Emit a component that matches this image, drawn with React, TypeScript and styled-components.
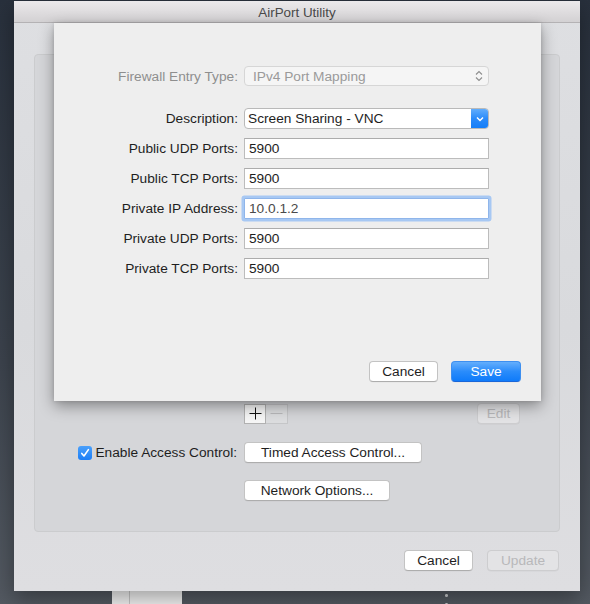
import React from 'react'
import styled, { createGlobalStyle, css } from 'styled-components'

const GlobalStyle = createGlobalStyle`
  html, body {
    margin: 0;
    padding: 0;
  }
  body {
    width: 590px;
    height: 604px;
    overflow: hidden;
    background: linear-gradient(180deg, #28303c 0%, #3c434d 60%, #535961 100%);
    font-family: "Liberation Sans", Arial, sans-serif;
    font-size: 13.7px;
    color: #1e1e1e;
  }
  * { box-sizing: border-box; }
`

const Desktop = styled.div`
  display: flex;
  flex-direction: column;
  height: 604px;
  padding-top: 1px;
`

const Window = styled.div`
  position: relative;
  flex: none;
  margin-left: 14px;
  width: 566px;
  height: 590px;
  display: flex;
  flex-direction: column;
  background: linear-gradient(180deg, #dedfe2 0%, #d9dadd 55%, #dedee1 100%);
  box-shadow: 0 8px 20px rgba(0, 0, 0, 0.35);
`

const TitleBar = styled.div`
  flex: none;
  height: 22px;
  padding-top: 2px;
  border-bottom: 1px solid #b4b2b4;
  background: linear-gradient(180deg, #ebe9eb, #d3d1d3);
  display: flex;
  align-items: center;
  justify-content: center;
  font-size: 13.4px;
  color: #4a4a4a;
`

const Body = styled.div`
  flex: 1;
  display: flex;
  flex-direction: column;
  padding: 31px 20px 20px 20px;
`

const Panel = styled.div`
  flex: 1;
  display: flex;
  flex-direction: column;
  border: 1px solid #cbccce;
  border-radius: 4px;
  background: #d5d6d9;
  padding-bottom: 31px;
`

const ListArea = styled.div`
  flex: 1;
`

const FormRow = styled.div<{ $gap?: number }>`
  display: grid;
  grid-template-columns: 202px 1fr;
  column-gap: 7px;
  align-items: center;
  height: 20px;
  margin-top: ${p => p.$gap ?? 0}px;
  padding-right: 39px;
`

const RowLabel = styled.label`
  display: flex;
  align-items: center;
  justify-content: flex-end;
  gap: 4px;
  white-space: nowrap;
`

const Cell = styled.div`
  display: flex;
  align-items: center;
  height: 100%;
`

const Button = styled.button<{ $w: number; $primary?: boolean }>`
  width: ${p => p.$w}px;
  height: 21px;
  padding: 0;
  border-radius: 4px;
  font-family: inherit;
  font-size: 13.7px;
  line-height: 19px;
  color: #1e1e1e;
  background: #ffffff;
  border: 1px solid #c3c3c3;
  border-bottom-color: #adadad;
  box-shadow: 0 0.5px 0 rgba(0, 0, 0, 0.05);
  ${p => p.$primary && css`
    color: #ffffff;
    background: linear-gradient(180deg, #64aefc 0%, #2a8cfb 50%, #0f7bfa 100%);
    border-color: #3d8ff0;
    border-bottom-color: #1a66d8;
  `}
  &:disabled {
    color: #b8b8ba;
    background: #e3e3e5;
    border-color: #cdcdcf;
  }
`

const Segmented = styled.div`
  display: flex;
  height: 20px;
`

const Segment = styled.div<{ $off?: boolean }>`
  width: 22px;
  height: 20px;
  display: flex;
  align-items: center;
  justify-content: center;
  border: 1px solid ${p => (p.$off ? '#c5c6c8' : '#b1b1b1')};
  background: ${p => (p.$off ? '#dcdddf' : '#f6f6f6')};
  & + & { border-left: none; }
`

const Check = styled.span`
  width: 14px;
  height: 14px;
  margin-right: -1px;
  border-radius: 3px;
  background: linear-gradient(180deg, #4aa0fb, #1b7ef6);
  display: flex;
  align-items: center;
  justify-content: center;
`

const Footer = styled.div`
  display: flex;
  justify-content: flex-end;
  gap: 14px;
  margin-top: 18px;
  padding-right: 1px;
`

const Sheet = styled.div`
  position: absolute;
  top: 22px;
  left: 40px;
  width: 487px;
  height: 378px;
  background: #eeeeee;
  box-shadow: 0 5px 14px rgba(0, 0, 0, 0.38), 0 0 4px rgba(0, 0, 0, 0.12);
  display: flex;
  flex-direction: column;
  padding: 43px 20px 19px 0;
`

const Form = styled.div`
  display: flex;
  flex-direction: column;
  gap: 9px;
`

const SheetRow = styled.div<{ $lead?: boolean }>`
  display: grid;
  grid-template-columns: 184px 245px;
  column-gap: 6px;
  align-items: center;
  height: ${p => (p.$lead ? 20 : 21)}px;
  margin-bottom: ${p => (p.$lead ? 13 : 0)}px;
`

const SheetLabel = styled.div<{ $dim?: boolean }>`
  text-align: right;
  white-space: nowrap;
  color: ${p => (p.$dim ? '#8e8e8e' : '#1e1e1e')};
`

const Popup = styled.div<{ $disabled?: boolean }>`
  height: 100%;
  display: flex;
  align-items: center;
  border-radius: 4px;
  overflow: hidden;
  padding-left: ${p => (p.$disabled ? 8 : 3)}px;
  background: ${p => (p.$disabled ? '#f5f5f5' : '#ffffff')};
  border: 1px solid ${p => (p.$disabled ? '#d6d6d6' : '#b9b9b9')};
  color: ${p => (p.$disabled ? '#9a9a9a' : '#1e1e1e')};
`

const PopupArrow = styled.div`
  margin-left: auto;
  width: 17px;
  align-self: stretch;
  display: flex;
  align-items: center;
  justify-content: center;
  background: linear-gradient(180deg, #61adfc 0%, #2b8bfa 50%, #157ef8 100%);
`

const Stepper = styled.div`
  margin-left: auto;
  width: 18px;
  display: flex;
  align-items: center;
  justify-content: center;
`

const Field = styled.div<{ $focus?: boolean }>`
  height: 21px;
  display: flex;
  align-items: center;
  padding-left: 4px;
  background: #ffffff;
  border: 1px solid #bcbcbc;
  border-top-color: #acacac;
  ${p => p.$focus && css`
    color: #4a4a4a;
    border-color: #8fb5ea;
    box-shadow: 0 0 0 2.5px #a7c8f3;
    border-radius: 1px;
  `}
`

const SheetButtons = styled.div`
  margin-top: auto;
  display: flex;
  justify-content: flex-end;
  gap: 13px;
`

const Strip = styled.div`
  flex: 1;
  display: flex;
`

const BaseStation = styled.div`
  margin-left: 112px;
  width: 70px;
  background: linear-gradient(90deg, #f4f4f4 0 17px, #c9c9c9 17px 18px, #f4f4f4 18px);
`

const Link = styled.div`
  margin-left: 263px;
  width: 3px;
  background: radial-gradient(circle, #c9cbce 1.3px, transparent 1.6px) 0 0 / 3px 9px repeat-y;
`

const fields: { label: string; value: string; focus?: boolean }[] = [
  { label: 'Public UDP Ports:', value: '5900' },
  { label: 'Public TCP Ports:', value: '5900' },
  { label: 'Private IP Address:', value: '10.0.1.2', focus: true },
  { label: 'Private UDP Ports:', value: '5900' },
  { label: 'Private TCP Ports:', value: '5900' },
]

const App: React.FC = () => {
  return (
    <>
      <GlobalStyle />
      <Desktop>
        <Window>
          <TitleBar>AirPort Utility</TitleBar>
          <Body>
            <Panel>
              <ListArea />
              <FormRow>
                <div />
                <Cell>
                  <Segmented>
                    <Segment>
                      <svg width="13" height="13" viewBox="0 0 13 13">
                        <path d="M6.5 0.5v12M0.5 6.5h12" stroke="#111" strokeWidth="1" />
                      </svg>
                    </Segment>
                    <Segment $off>
                      <svg width="13" height="13" viewBox="0 0 13 13">
                        <path d="M0.5 6.5h12" stroke="#b9b9bb" strokeWidth="1" />
                      </svg>
                    </Segment>
                  </Segmented>
                  <Button $w={43} disabled style={{ marginLeft: 'auto' }}>Edit</Button>
                </Cell>
              </FormRow>
              <FormRow $gap={19}>
                <RowLabel>
                  <Check>
                    <svg width="10" height="10" viewBox="0 0 10 10">
                      <path d="M1.8 5.4 L4 8 L8.4 1.6" fill="none" stroke="#fff" strokeWidth="1.6" strokeLinecap="round" strokeLinejoin="round" />
                    </svg>
                  </Check>
                  Enable Access Control:
                </RowLabel>
                <Cell>
                  <Button $w={178}>Timed Access Control...</Button>
                </Cell>
              </FormRow>
              <FormRow $gap={18}>
                <div />
                <Cell>
                  <Button $w={146}>Network Options...</Button>
                </Cell>
              </FormRow>
            </Panel>
            <Footer>
              <Button $w={69}>Cancel</Button>
              <Button $w={72} disabled>Update</Button>
            </Footer>
          </Body>

          <Sheet>
            <Form>
              <SheetRow $lead>
                <SheetLabel $dim>Firewall Entry Type:</SheetLabel>
                <Popup $disabled>
                  IPv4 Port Mapping
                  <Stepper>
                    <svg width="8" height="12" viewBox="0 0 8 12">
                      <path d="M1 4.5 L4 1.5 L7 4.5 M1 7.5 L4 10.5 L7 7.5" fill="none" stroke="#8e8e8e" strokeWidth="1.1" />
                    </svg>
                  </Stepper>
                </Popup>
              </SheetRow>
              <SheetRow>
                <SheetLabel>Description:</SheetLabel>
                <Popup>
                  Screen Sharing - VNC
                  <PopupArrow>
                    <svg width="8" height="6" viewBox="0 0 8 6">
                      <path d="M1 1.5 L4 4.5 L7 1.5" fill="none" stroke="#fff" strokeWidth="1.5" />
                    </svg>
                  </PopupArrow>
                </Popup>
              </SheetRow>
              {fields.map(f => (
                <SheetRow key={f.label}>
                  <SheetLabel>{f.label}</SheetLabel>
                  <Field $focus={f.focus}>{f.value}</Field>
                </SheetRow>
              ))}
            </Form>
            <SheetButtons>
              <Button $w={69}>Cancel</Button>
              <Button $w={70} $primary>Save</Button>
            </SheetButtons>
          </Sheet>
        </Window>
        <Strip>
          <BaseStation />
          <Link />
        </Strip>
      </Desktop>
    </>
  )
}

export default App
